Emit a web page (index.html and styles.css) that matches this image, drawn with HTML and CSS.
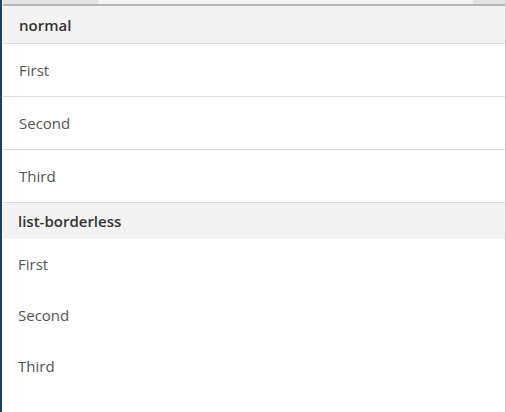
FILE: index.html
```html
<!DOCTYPE html>
<html>
<head>
<meta charset="utf-8">
<link rel="stylesheet" href="styles.css">
</head>
<body>
<div class="frame">
  <div class="edge"></div>
  <div class="panel">
    <div class="topstrip"><div class="thumb"></div></div>
    <div class="topline"></div>
    <div class="group">
      <div class="head">normal</div>
      <ul class="list">
        <li>First</li>
        <li>Second</li>
        <li>Third</li>
      </ul>
    </div>
    <div class="group">
      <div class="head head-b">list-borderless</div>
      <ul class="list list-borderless">
        <li>First</li>
        <li>Second</li>
        <li>Third</li>
      </ul>
    </div>
  </div>
</div>
</body>
</html>
```
FILE: styles.css
```css
html, body {
  margin: 0;
  padding: 0;
  background: #fff;
}
body {
  font-family: "Open Sans", "Noto Sans", sans-serif;
  width: 506px;
  height: 412px;
  overflow: hidden;
}
.frame {
  display: flex;
  height: 412px;
}
.edge {
  width: 2px;
  background: #1d3e6e;
  flex: none;
}
.panel {
  flex: 1;
  margin-left: 1px;
  border-right: 1px solid #c8c8c8;
  display: flex;
  flex-direction: column;
}
.topstrip {
  height: 4px;
  background: #e3e3e3;
  display: flex;
}
.thumb {
  margin-left: 95px;
  width: 375px;
  background: #f2f2f2;
}
.topline {
  height: 2px;
  background: #b5b5b5;
}
.head {
  background: #f3f3f3;
  color: #333;
  font-weight: 600;
  font-size: 15px;
  padding-left: 16px;
  height: 38px;
  line-height: 38px;
  border-bottom: 1px solid #dcdcdc;
  box-sizing: border-box;
}
.head-b {
  height: 37px;
  line-height: 37px;
  border-top: 1px solid #dcdcdc;
  border-bottom: none;
  padding-left: 15px;
}
.list {
  list-style: none;
  margin: 0;
  padding: 0;
}
.list li {
  height: 52px;
  line-height: 52px;
  padding-left: 16px;
  font-size: 15px;
  color: #555;
  border-bottom: 1px solid #dcdcdc;
}
.list li:last-child {
  border-bottom: none;
}
.list-borderless li {
  border-bottom: none;
  height: 51px;
  line-height: 51px;
  padding-left: 15px;
}
```
